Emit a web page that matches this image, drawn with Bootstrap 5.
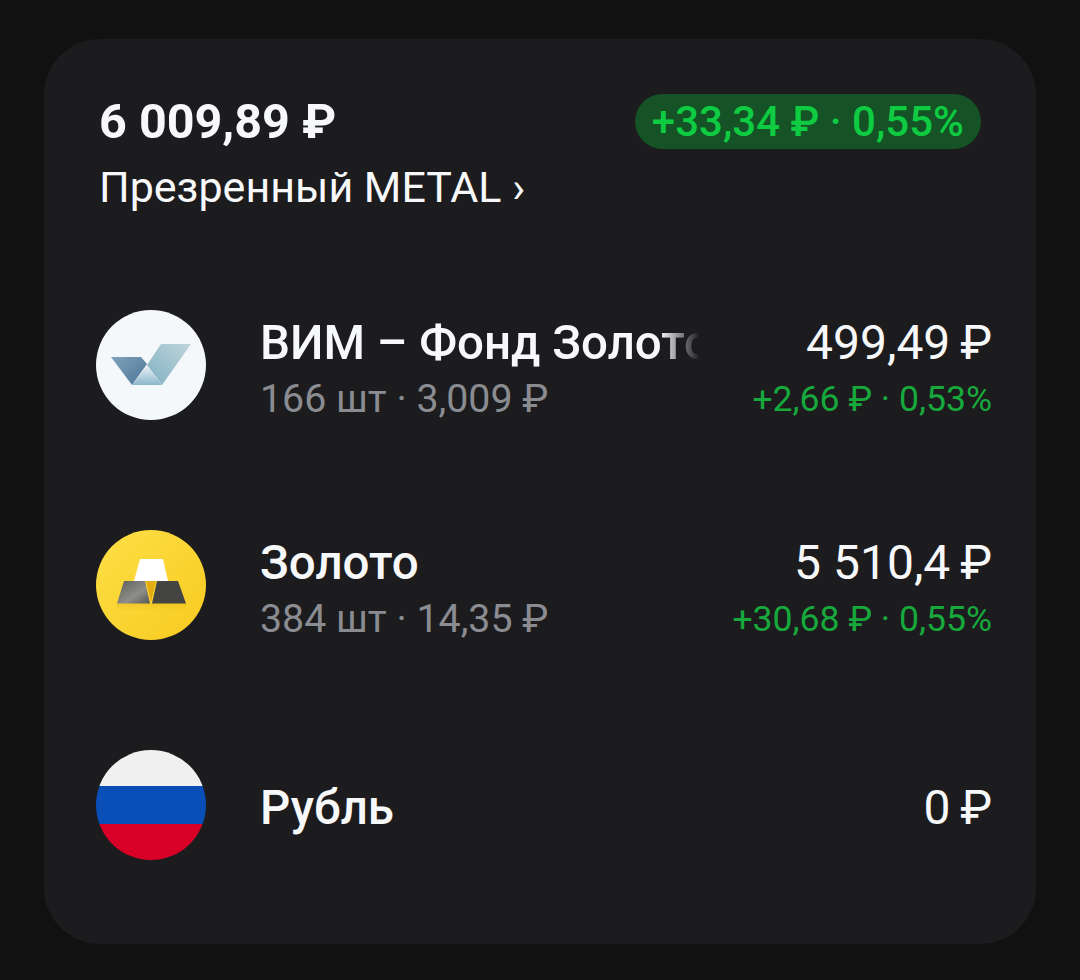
<!DOCTYPE html>
<html lang="ru">
<head>
  <meta charset="UTF-8" />
  <title>Презренный METAL</title>
  <link href="https://cdn.jsdelivr.net/npm/bootstrap@5.3.0/dist/css/bootstrap.min.css" rel="stylesheet">
  <style>
    body {
      background: #111112;
      font-family: Roboto, "Liberation Sans", sans-serif;
      color: #f7f8fa;
      padding: 39px 44px 36px;
    }

    .portfolio-card {
      background: #1c1c1e;
      border-radius: 56px;
      height: 905px;
      padding: 55px 44px 0 55px;
    }

    .total-sum {
      font-size: 48.5px;
      font-weight: 700;
      line-height: 56px;
    }

    .portfolio-name {
      font-size: 43px;
      line-height: 52px;
      margin-top: 11px;
    }

    .gain-pill {
      background: #155225;
      color: #0ecb42;
      font-size: 42px;
      font-weight: 500;
      line-height: 55px;
      height: 55px;
      padding: 0 17px;
      margin-right: 11px;
      white-space: nowrap;
    }

    .asset-list {
      margin-top: 42px;
      margin-left: -3px;
    }

    .asset-row {
      height: 220px;
      gap: 54px;
    }

    .asset-pic {
      width: 110px;
      height: 110px;
      flex: none;
    }

    .asset-name {
      font-size: 47.5px;
      font-weight: 500;
      line-height: 68px;
      white-space: nowrap;
    }

    .name-fade {
      width: 440px;
      overflow: hidden;
      -webkit-mask-image: linear-gradient(to right, #000 400px, transparent 440px);
      mask-image: linear-gradient(to right, #000 400px, transparent 440px);
    }

    .asset-sub {
      color: #8a8c92;
      font-size: 39.3px;
      line-height: 44px;
      white-space: nowrap;
    }

    .asset-sum {
      font-size: 48px;
      line-height: 68px;
      white-space: nowrap;
    }

    .solo-line {
      padding-top: 6px;
    }

    .asset-gain {
      color: #17a93c;
      font-size: 35.6px;
      line-height: 44px;
      white-space: nowrap;
    }
  </style>
</head>
<body>
  <div class="portfolio-card">
    <div class="d-flex justify-content-between align-items-start">
      <div>
        <div class="total-sum">6 009,89 ₽</div>
        <div class="portfolio-name">Презренный METAL ›</div>
      </div>
      <div class="gain-pill rounded-pill">+33,34 ₽ · 0,55%</div>
    </div>

    <div class="asset-list">
      <div class="asset-row d-flex align-items-center">
        <svg class="asset-pic" viewBox="0 0 110 110">
          <defs>
            <linearGradient id="vimA" x1="0" y1="0" x2="1" y2="1"><stop offset="0" stop-color="#7ea3bb"/><stop offset="1" stop-color="#4f7396"/></linearGradient>
            <linearGradient id="vimB" x1="1" y1="0" x2="0" y2="1"><stop offset="0" stop-color="#c0d5da"/><stop offset="1" stop-color="#7fb0c4"/></linearGradient>
            <linearGradient id="vimC" x1="0" y1="0" x2="0" y2="1"><stop offset="0" stop-color="#e6eff3"/><stop offset="1" stop-color="#8db8cb"/></linearGradient>
          </defs>
          <circle cx="55" cy="55" r="55" fill="#f5f8fa"/>
          <path d="M15 47H45L51 54 36 75Z" fill="url(#vimA)"/>
          <path d="M65 34H95L66 75 51 55Z" fill="url(#vimB)"/>
          <path d="M51 56 66 75H36Z" fill="url(#vimC)"/>
        </svg>
        <div class="flex-grow-1 overflow-hidden">
          <div class="asset-name name-fade">ВИМ – Фонд Золото</div>
          <div class="asset-sub">166 шт · 3,009 ₽</div>
        </div>
        <div class="text-end">
          <div class="asset-sum">499,49&#8201;₽</div>
          <div class="asset-gain">+2,66 ₽ · 0,53%</div>
        </div>
      </div>

      <div class="asset-row d-flex align-items-center">
        <svg class="asset-pic" viewBox="0 0 110 110">
          <defs>
            <linearGradient id="goldBg" x1="0" y1="0" x2="1" y2="1"><stop offset="0" stop-color="#fde047"/><stop offset="1" stop-color="#f8ca1f"/></linearGradient>
            <linearGradient id="goldShade" x1="0" y1="0" x2="0" y2="1"><stop offset="0" stop-color="#d9a90f" stop-opacity=".3"/><stop offset="1" stop-color="#d9a90f" stop-opacity="0"/></linearGradient>
            <linearGradient id="barL" x1="0" y1="0" x2="1" y2="1"><stop offset="0" stop-color="#5d5d5b"/><stop offset="0.6" stop-color="#8d8d89"/><stop offset="1" stop-color="#555"/></linearGradient>
          </defs>
          <circle cx="55" cy="55" r="55" fill="url(#goldBg)"/>
          <rect x="21" y="73" width="69" height="8" fill="url(#goldShade)"/>
          <path d="M44 29H67L72 51H38Z" fill="#fff"/>
          <path d="M50 51H60L55 72Z" fill="#e3ac12"/>
          <path d="M28 51H49L54 73.500H21Z" fill="url(#barL)"/>
          <path d="M61 51H82L90 73.500H56Z" fill="#444443"/>
        </svg>
        <div class="flex-grow-1 overflow-hidden">
          <div class="asset-name">Золото</div>
          <div class="asset-sub">384 шт · 14,35 ₽</div>
        </div>
        <div class="text-end">
          <div class="asset-sum">5 510,4&#8201;₽</div>
          <div class="asset-gain">+30,68 ₽ · 0,55%</div>
        </div>
      </div>

      <div class="asset-row d-flex align-items-center">
        <svg class="asset-pic" viewBox="0 0 110 110">
          <defs><clipPath id="flagClip"><circle cx="55" cy="55" r="55"/></clipPath></defs>
          <g clip-path="url(#flagClip)">
            <rect width="110" height="36" fill="#f0f0f0"/>
            <rect y="36" width="110" height="38" fill="#0a4eb8"/>
            <rect y="74" width="110" height="36" fill="#d80027"/>
          </g>
        </svg>
        <div class="asset-name flex-grow-1 solo-line">Рубль</div>
        <div class="asset-sum solo-line">0&#8201;₽</div>
      </div>
    </div>
  </div>
  <script src="https://cdn.jsdelivr.net/npm/bootstrap@5.3.0/dist/js/bootstrap.bundle.min.js"></script>
</body>
</html>
